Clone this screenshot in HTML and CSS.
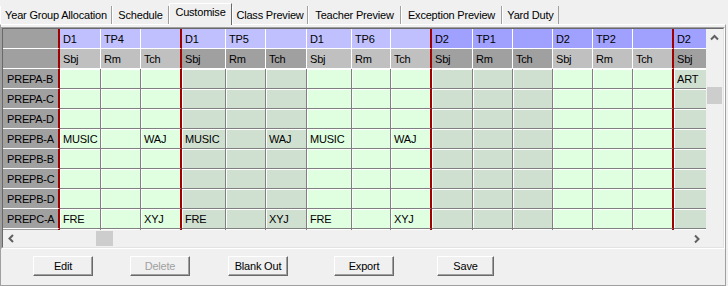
FILE: index.html
```html
<!DOCTYPE html>
<html>
<head>
<meta charset="utf-8">
<link rel="stylesheet" href="styles.css">
</head>
<body>
<div class="tabs">
  <div class="tab t1">Year Group Allocation</div>
  <div class="tab t2">Schedule</div>
  <div class="tab sel">Customise</div>
  <div class="tab t4">Class Preview</div>
  <div class="tab t5">Teacher Preview</div>
  <div class="tab t6">Exception Preview</div>
  <div class="tab t7">Yard Duty</div>
</div>
<div class="panel">
  <div class="gridframe">
    <div class="gridtop">
      <div class="viewport">
        <div class="row hdr1"><div></div><div>D1</div><div>TP4</div><div></div><div>D1</div><div>TP5</div><div></div><div>D1</div><div>TP6</div><div></div><div>D2</div><div>TP1</div><div></div><div>D2</div><div>TP2</div><div></div><div>D2</div></div>
        <div class="row hdr2"><div></div><div>Sbj</div><div>Rm</div><div>Tch</div><div>Sbj</div><div>Rm</div><div>Tch</div><div>Sbj</div><div>Rm</div><div>Tch</div><div>Sbj</div><div>Rm</div><div>Tch</div><div>Sbj</div><div>Rm</div><div>Tch</div><div>Sbj</div></div>
        <div class="row b"><div>PREPA-B</div><div></div><div></div><div></div><div></div><div></div><div></div><div></div><div></div><div></div><div></div><div></div><div></div><div></div><div></div><div></div><div>ART</div></div>
        <div class="row b"><div>PREPA-C</div><div></div><div></div><div></div><div></div><div></div><div></div><div></div><div></div><div></div><div></div><div></div><div></div><div></div><div></div><div></div><div></div></div>
        <div class="row b"><div>PREPA-D</div><div></div><div></div><div></div><div></div><div></div><div></div><div></div><div></div><div></div><div></div><div></div><div></div><div></div><div></div><div></div><div></div></div>
        <div class="row b"><div>PREPB-A</div><div>MUSIC</div><div></div><div>WAJ</div><div>MUSIC</div><div></div><div>WAJ</div><div>MUSIC</div><div></div><div>WAJ</div><div></div><div></div><div></div><div></div><div></div><div></div><div></div></div>
        <div class="row b"><div>PREPB-B</div><div></div><div></div><div></div><div></div><div></div><div></div><div></div><div></div><div></div><div></div><div></div><div></div><div></div><div></div><div></div><div></div></div>
        <div class="row b"><div>PREPB-C</div><div></div><div></div><div></div><div></div><div></div><div></div><div></div><div></div><div></div><div></div><div></div><div></div><div></div><div></div><div></div><div></div></div>
        <div class="row b"><div>PREPB-D</div><div></div><div></div><div></div><div></div><div></div><div></div><div></div><div></div><div></div><div></div><div></div><div></div><div></div><div></div><div></div><div></div></div>
        <div class="row b"><div>PREPC-A</div><div>FRE</div><div></div><div>XYJ</div><div>FRE</div><div></div><div>XYJ</div><div>FRE</div><div></div><div>XYJ</div><div></div><div></div><div></div><div></div><div></div><div></div><div></div></div>
        <div class="row b"><div></div><div></div><div></div><div></div><div></div><div></div><div></div><div></div><div></div><div></div><div></div><div></div><div></div><div></div><div></div><div></div><div></div></div>
      </div>
      <div class="vscroll">
        <svg class="uparrow" width="17" height="17" viewBox="0 0 17 17"><path d="M5 10.5 L8.5 7 L12 10.5" fill="none" stroke="#606060" stroke-width="2"/></svg>
        <div class="vthumb"></div>
      </div>
    </div>
    <div class="gridbottom">
      <div class="hscroll">
        <svg class="larrow" width="17" height="17" viewBox="0 0 17 17"><path d="M10 5 L6.5 8.5 L10 12" fill="none" stroke="#606060" stroke-width="2"/></svg>
        <div class="hthumb"></div>
        <svg class="rarrow" width="17" height="17" viewBox="0 0 17 17"><path d="M7 5.5 L10.5 9 L7 12.5" fill="none" stroke="#606060" stroke-width="2"/></svg>
      </div>
      <div class="corner"></div>
    </div>
  </div>
  <div class="buttons">
    <div class="btn b-edit">Edit</div>
    <div class="btn b-del disabled">Delete</div>
    <div class="btn b-blank">Blank Out</div>
    <div class="btn b-export">Export</div>
    <div class="btn b-save">Save</div>
  </div>
</div>
</body>
</html>
```
FILE: styles.css
```css
* { box-sizing: border-box; }
html, body {
  margin: 0;
  padding: 0;
  background: #f0f0f0;
  font-family: "Liberation Sans", Arial, sans-serif;
  font-size: 11px;
  letter-spacing: -0.2px;
  color: #000;
}
body { width: 728px; height: 286px; overflow: hidden; }

/* Tabs */
.tabs {
  display: flex;
  height: 24px;
  align-items: flex-start;
}
.tab {
  height: 18px;
  margin-top: 6px;
  line-height: 18px;
  text-align: center;
  white-space: nowrap;
  border-left: 1px solid #fff;
  border-right: 1px solid #a0a0a0;
}
.t1 { width: 112px; }
.t2 { width: 57px; }
.sel {
  width: 63px;
  height: 22px;
  margin-top: 3px;
  line-height: 17px;
  border-top: 1px solid #fff;
  border-right: 1px solid #696969;
  background: #f0f0f0;
  position: relative;
  z-index: 1;
  margin-bottom: -2px;
}
.t4 { width: 76px; }
.t5 { width: 93px; }
.t6 { width: 101px; }
.t7 { width: 57px; }

/* Panel */
.panel {
  width: 726px;
  height: 262px;
  border-top: 1px solid #fff;
  border-left: 1px solid #a0a0a0;
  border-right: 1px solid #a0a0a0;
  border-bottom: 1px solid #a0a0a0;
  padding-top: 2px;
}
.gridframe {
  width: 724px;
  border-top: 1px solid #a0a0a0;
  border-left: 1px solid #a0a0a0;
  border-right: 1px solid #fff;
  border-bottom: 1px solid #fff;
}
.gridtop, .gridbottom {
  display: flex;
  border-left: 1px solid #696969;
  border-right: 1px solid #e3e3e3;
}
.gridtop { border-top: 1px solid #696969; }
.gridbottom { border-bottom: 1px solid #e3e3e3; }

.viewport {
  width: 703px;
  height: 201px;
  overflow: hidden;
}
.row {
  display: grid;
  grid-template-columns: 57px 41px 40px 41px 44px 40px 41px 45px 39px 41px 41px 40px 40px 40px 40px 41px 40px;
  width: 711px;
  height: 20px;
}
.row > div {
  height: 20px;
  padding: 2px 0 0 3px;
  line-height: 17px;
  white-space: nowrap;
  overflow: hidden;
  border-right: 1px solid #808080;
  border-bottom: 1px solid #808080;
  box-shadow: inset 1px 1px 0 #fff;
}
.hdr1 > div, .hdr2 > div {
  border-right-color: #fff;
  border-bottom-color: #fff;
  box-shadow: none;
}
.hdr1 > div:nth-child(n+2) { background: #c0c0ff; }
.hdr1 > div:nth-child(n+11) { background: #a0a0ff; }
.hdr2 > div:nth-child(n+2) { background: #c0c0c0; }
.hdr2 > div:nth-child(n+5):nth-child(-n+7),
.hdr2 > div:nth-child(n+11):nth-child(-n+13),
.hdr2 > div:nth-child(n+17) { background: #a0a0a0; }

.b > div:nth-child(n+2) { background: #e0ffe0; }
.b > div:nth-child(n+5):nth-child(-n+7),
.b > div:nth-child(n+11):nth-child(-n+13),
.b > div:nth-child(n+17) { background: #d0e0d0; }

.row > div:nth-child(4),
.row > div:nth-child(10),
.row > div:nth-child(16) { border-right: 2px solid #a00000; }

.row > div:first-child {
  background: #a0a0a0;
  border-right: 2px solid #a00000;
  border-bottom-color: #fff;
  box-shadow: none;
  padding-left: 4px;
}

/* Scrollbars */
.vscroll {
  width: 17px;
  height: 201px;
  background: #f0f0f0;
  display: flex;
  flex-direction: column;
  align-items: center;
}
.uparrow { display: block; flex: none; }
.vthumb {
  width: 15px;
  height: 17px;
  margin-top: 41px;
  background: #cdcdcd;
}
.hscroll {
  width: 703px;
  height: 17px;
  background: #f0f0f0;
  display: flex;
  align-items: center;
}
.larrow, .rarrow { display: block; flex: none; }
.hthumb {
  width: 17px;
  height: 15px;
  margin-left: 76px;
  background: #cdcdcd;
}
.rarrow { margin-left: 575px; }
.corner { width: 17px; height: 17px; background: #f0f0f0; }

/* Buttons */
.buttons {
  display: flex;
  margin-top: 7px;
  padding-left: 32px;
}
.btn {
  width: 60px;
  height: 20px;
  line-height: 18px;
  text-align: center;
  background: #f0f0f0;
  border: 1px solid;
  border-color: #fff #696969 #696969 #fff;
  box-shadow: inset -1px -1px 0 #a0a0a0;
  white-space: nowrap;
}
.disabled { color: #a0a0a0; }
.b-del { margin-left: 37px; }
.b-blank { margin-left: 38px; }
.b-export { margin-left: 46px; }
.b-save { margin-left: 43px; width: 57px; }
```
